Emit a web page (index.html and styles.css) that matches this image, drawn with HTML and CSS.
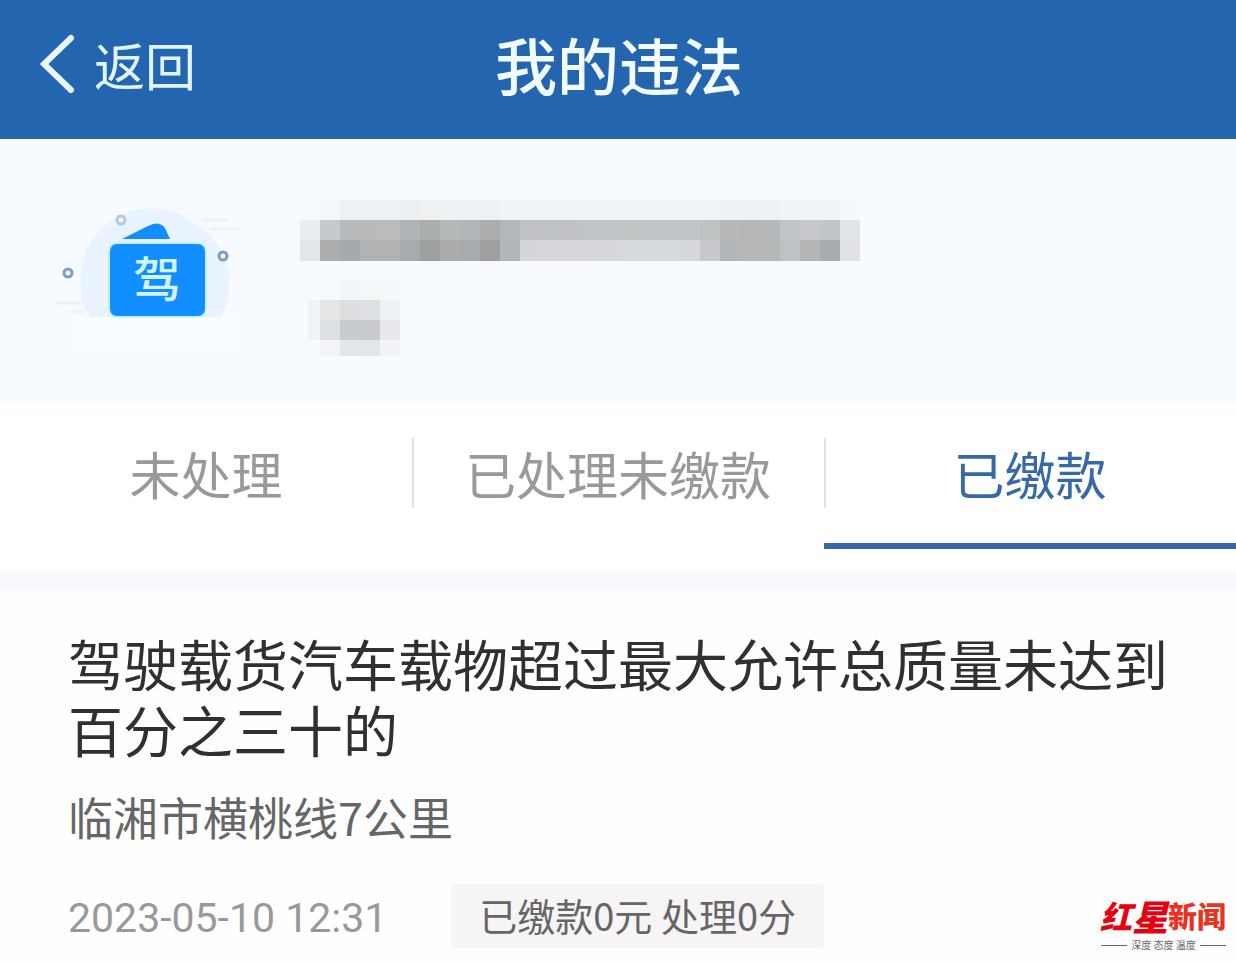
FILE: index.html
```
<!DOCTYPE html>
<html lang="zh-CN">
<head>
  <meta charset="UTF-8" />
  <meta name="viewport" content="width=device-width, initial-scale=1.0" />
  <title>我的违法</title>
  <link rel="stylesheet" href="styles.css">
</head>
<body>
  <header class="top-bar">
    <button class="back-btn" type="button">
      <svg class="back-icon" width="36" height="60" viewBox="0 0 36 60" aria-hidden="true">
        <path d="M31 4 L4 30 L31 56" />
      </svg>
      返回
    </button>
    <h1>我的违法</h1>
  </header>

  <section class="profile">
    <svg class="license-icon" width="200" height="170" viewBox="0 0 200 170" aria-hidden="true">
      <rect class="glow" x="25" y="137" width="165" height="30" rx="6" />
      <path class="halo" d="M40 137 C22 110 28 58 66 38 C92 22 128 26 150 48 C180 66 188 112 170 137 Z" />
      <path class="streak" d="M152 40 H178 M160 49 H190 M5 123 H38 M18 132 H34" />
      <path class="card-back" d="M72 59 L98 46 Q109 40 115 48 L120 59 Z" />
      <rect class="card-edge" x="58" y="62" width="99" height="76" rx="9" />
      <rect class="card" x="60" y="64" width="95" height="72" rx="7" />
      <circle class="dot light" cx="71" cy="40" r="4" />
      <circle class="dot" cx="173" cy="76" r="4" />
      <circle class="dot" cx="18" cy="93" r="4" />
      <text x="107" y="117" text-anchor="middle">驾</text>
    </svg>

    <!-- masked name and licence number -->
    <svg class="mask" width="570" height="160" viewBox="0 0 570 160" shape-rendering="crispEdges" aria-hidden="true">
      <g id="maskCells"></g>
    </svg>
  </section>

  <nav class="tabs">
    <button class="tab" type="button">未处理</button>
    <button class="tab" type="button">已处理未缴款</button>
    <button class="tab active" type="button">已缴款</button>
  </nav>

  <main class="record">
    <h2>驾驶载货汽车载物超过最大允许总质量未达到百分之三十的</h2>
    <p class="place">临湘市横桃线7公里</p>
    <div class="record-foot">
      <time datetime="2023-05-10T12:31">2023-05-10 12:31</time>
      <span class="tag">已缴款0元 处理0分</span>
    </div>
  </main>

  <div class="watermark">
    <div class="brand"><span class="brand-script">红</span><span class="brand-script big">星</span><span class="brand-name">新闻</span></div>
    <div class="slogan">深度 态度 温度</div>
  </div>

  <script>
    // each row: top, height, first x, colours of 20px cells
    const rows = [
      [0, 20, 0, ["#f6fafc", "#f3f7f9", "#edf1f3", "#edf1f3", "#edf1f3", "#edf0f2", "#eef0f2", "#edf1f3", "#edf1f3", "#edf1f3", "#f0f4f6", "#eff4f7", "#eff4f7", "#eff4f7", "#eff4f7", "#eff4f7", "#eff4f7", "#eff4f7", "#eff4f7", "#eff4f7", "#f0f4f7", "#edf1f3", "#edf1f3", "#edf1f3", "#f0f4f6", "#f1f4f7", "#eff4f7", "#f5f9fb"]],
      [20, 20, 0, ["#e9eef0", "#c4cacd", "#b8babc", "#b9babb", "#babbbd", "#b0b5b8", "#abadaf", "#b5b9ba", "#b1b6b8", "#acadaf", "#b3b8ba", "#c0c0c7", "#bfc3c8", "#c1c2c6", "#bfc4c7", "#c0c5c7", "#c0c5c6", "#c0c5c8", "#c2c3c8", "#c0c5c8", "#bdc2c3", "#b8b8b9", "#b6b7b9", "#b7b8ba", "#c0c5c9", "#c8c8ce", "#c1c6ca", "#e2e5e8"]],
      [40, 21, 0, ["#e2e5e9", "#acadaf", "#a5aaad", "#b0b2b4", "#b0b2b4", "#a6abae", "#9e9fa0", "#a9abad", "#a8abad", "#9f9fa0", "#b2b8ba", "#d6d6d8", "#d7d7dd", "#d7d7dd", "#d7d7dc", "#d7d8db", "#d6dadd", "#d6d9dd", "#d6d9dd", "#d6d8db", "#c8c9cc", "#b2b6b8", "#b5b7b9", "#b5b7b9", "#bdc2c4", "#b4b6b8", "#a9acae", "#e0e2e7"]],
      [80, 20, 20, ["#f7fafc", "#f3f6f8", "#f4f7f8", "#f6f9fc"]],
      [100, 20, 20, ["#e6e6e9", "#dedee0", "#dce0e3", "#eff2f5"]],
      [120, 20, 20, ["#dce0e3", "#c8cbd0", "#c9cad0", "#e8e8eb"]],
      [140, 16, 20, ["#f2f4f8", "#e2e7ea", "#e2e6e9", "#f2f3f7"]]
    ];

    function renderMask() {
      let html = '<rect x="8" y="100" width="12" height="40" fill="#f0f3f6" />';
      rows.forEach(([y, h, x, cells]) => {
        cells.forEach((fill, i) => {
          html += `<rect x="${x + i * 20}" y="${y}" width="20" height="${h}" fill="${fill}" />`;
        });
      });
      document.getElementById("maskCells").innerHTML = html;
    }

    renderMask();
  </script>
</body>
</html>
```
FILE: styles.css
```
* {
  box-sizing: border-box;
}

body {
  margin: 0;
  font-family: "Noto Sans CJK SC", sans-serif;
  background-color: #fefefe;
  color: #333;
  position: relative;
}

h1, h2, p {
  margin: 0;
}

button {
  font-family: inherit;
  border: none;
  background: none;
  padding: 0;
  cursor: pointer;
}

.top-bar {
  display: grid;
  grid-template-columns: 1fr auto 1fr;
  align-items: center;
  height: 139px;
  padding: 0 38px 12px 40px;
  background-color: #2365af;
  color: #f2fbff;
}

.top-bar h1 {
  font-size: 62px;
  line-height: 80px;
  font-weight: 500;
}

.back-btn {
  display: flex;
  align-items: center;
  justify-self: start;
  gap: 18px;
  font-size: 51px;
  line-height: 80px;
  color: #e2f4ff;
}

.back-icon path {
  fill: none;
  stroke: #e8f7ff;
  stroke-width: 6;
  stroke-linecap: round;
}

.profile {
  display: flex;
  gap: 50px;
  height: 264px;
  padding: 41px 50px;
  background-color: #f7fbff;
}

.license-icon,
.mask {
  flex-shrink: 0;
}

.mask {
  margin-top: 20px;
}

.glow {
  fill: #fafdff;
}

.halo {
  fill: #e8f3fe;
}

.streak {
  fill: none;
  stroke: #edf3f9;
  stroke-width: 3;
}

.card-back,
.card {
  fill: #118eff;
}

.card-edge {
  fill: #c8efff;
}

.dot {
  fill: #eef6fd;
  stroke: #7e9dc0;
  stroke-width: 3;
}

.dot.light {
  stroke: #b3c9dd;
}

.license-icon text {
  font-size: 48px;
  font-weight: 500;
  fill: #d2f2ff;
}

.tabs {
  display: grid;
  grid-template-columns: repeat(3, 1fr);
  padding-bottom: 22px;
  border-bottom: 20px solid #f8f9fd;
  background-color: #fff;
}

.tab {
  position: relative;
  height: 146px;
  font-size: 51px;
  line-height: 74px;
  color: #999;
  border-bottom: 6px solid transparent;
}

.tab + .tab::before {
  content: "";
  position: absolute;
  left: 0;
  top: 35px;
  width: 2px;
  height: 70px;
  background-color: #e2e2e2;
}

.tab.active {
  color: #3569a8;
  border-bottom-color: #3866a8;
}

.record {
  padding: 38px 68px 12px;
}

.record h2 {
  font-size: 55px;
  line-height: 66px;
  font-weight: 400;
  color: #303030;
}

.place {
  margin-top: 24px;
  font-size: 45px;
  line-height: 64px;
  color: #666;
}

.record-foot {
  display: flex;
  align-items: center;
  gap: 64px;
  margin-top: 35px;
}

.record-foot time {
  padding-top: 4px;
  font-family: Roboto, sans-serif;
  font-size: 41px;
  line-height: 60px;
  color: #999;
}

.tag {
  padding: 0 28px 2px;
  font-size: 38px;
  line-height: 62px;
  color: #666;
  background-color: #f7f4f6;
  border-radius: 4px;
}

.watermark {
  position: absolute;
  right: 10px;
  bottom: 8px;
  width: 125px;
}

.brand {
  display: flex;
  align-items: center;
  justify-content: flex-end;
  height: 46px;
  font-weight: 900;
  color: #e83323;
  white-space: nowrap;
}

.brand-script {
  font-size: 32px;
  font-style: italic;
  color: #e60012;
}

.brand-script.big {
  font-size: 36px;
}

.brand-name {
  font-size: 29px;
}

.slogan {
  display: flex;
  align-items: center;
  gap: 4px;
  font-size: 10px;
  line-height: 14px;
  color: #666;
  white-space: nowrap;
}

.slogan::before,
.slogan::after {
  content: "";
  flex: 1;
  height: 1px;
  background-color: #666;
}
```
